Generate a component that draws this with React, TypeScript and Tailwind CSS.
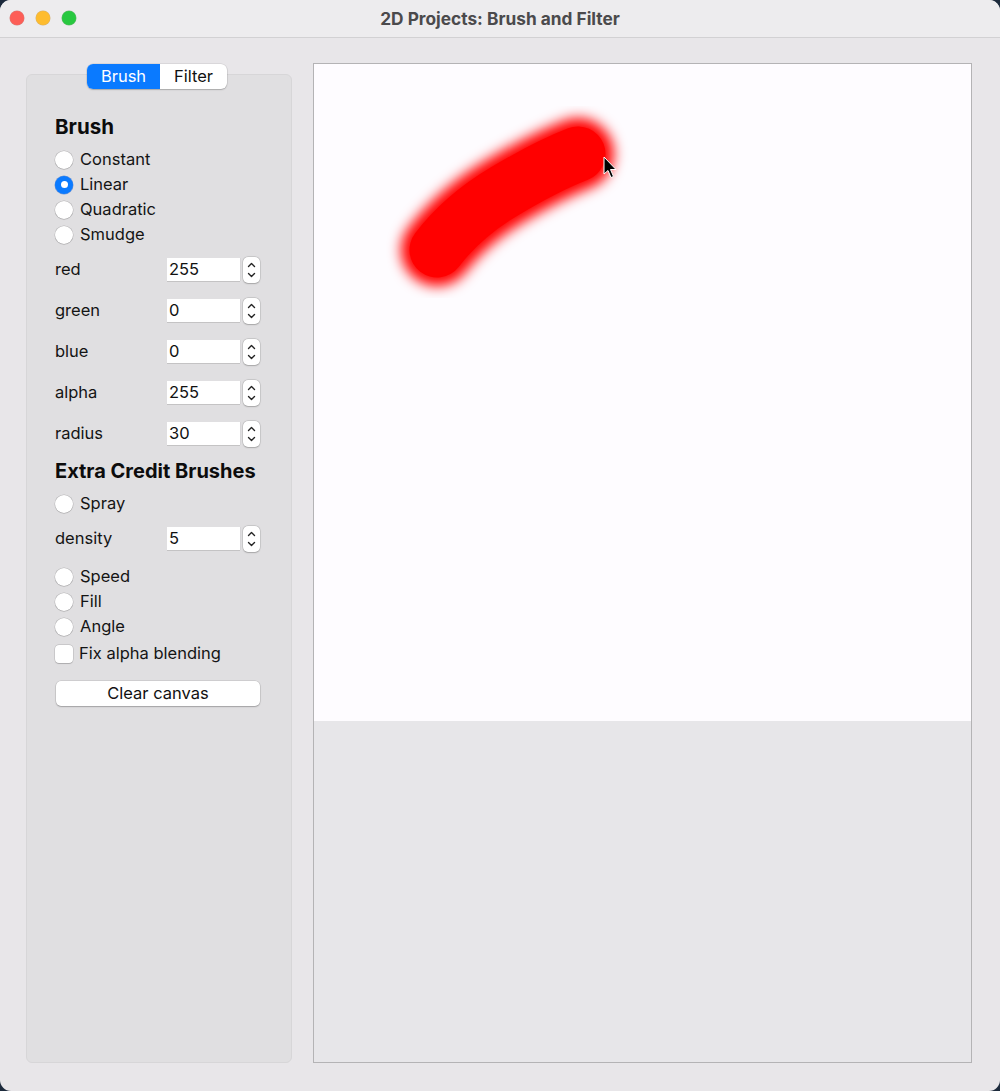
import React from "react";

const font = { fontFamily: "Inter, 'Noto Sans', 'Liberation Sans', sans-serif" };

function Radio({ label, checked = false }: { label: string; checked?: boolean }) {
  return (
    <div className="flex h-[25px] items-center">
      {checked ? (
        <div className="flex h-[18px] w-[18px] items-center justify-center rounded-full bg-[#0a7aff] shadow-[0_0_0_0.5px_rgba(0,80,200,0.5)]">
          <div className="h-[7px] w-[7px] rounded-full bg-white" />
        </div>
      ) : (
        <div className="h-[18px] w-[18px] rounded-full bg-white shadow-[0_0_0_0.5px_rgba(0,0,0,0.18),0_0.5px_1px_rgba(0,0,0,0.15)]" />
      )}
      <span className="ml-[7px] text-[16.5px] leading-none text-[#141414]">{label}</span>
    </div>
  );
}

function Spin({ label, value }: { label: string; value: string }) {
  return (
    <div className="flex h-[41px] items-center">
      <span className="w-[112px] text-[16.5px] leading-none text-[#141414]">{label}</span>
      <div className="flex h-[23px] w-[73px] items-center bg-white pl-[2px] text-[16.5px] leading-none text-[#111] shadow-[0_0.5px_0_0_rgba(0,0,0,0.25),0.5px_0_0_0_rgba(0,0,0,0.08)]">
        {value}
      </div>
      <div className="ml-[3px] flex h-[26px] w-[17px] flex-col items-center justify-center rounded-[5px] bg-white shadow-[0_0_0_0.5px_rgba(0,0,0,0.15),0_0.5px_1.5px_rgba(0,0,0,0.2)]">
        <svg width="9" height="20" viewBox="0 0 9 20" fill="none" stroke="#222" strokeWidth="1.4" strokeLinecap="round" strokeLinejoin="round">
          <path d="M1.5 6.5 L4.5 3.5 L7.5 6.5" />
          <path d="M1.5 13.5 L4.5 16.5 L7.5 13.5" />
        </svg>
      </div>
    </div>
  );
}

export default function App() {
  return (
    <div className="h-[1091px] w-[1000px] bg-[#1c2a3c]" style={font}>
      <div className="flex h-full w-full flex-col overflow-hidden rounded-[11px] bg-[#e8e6e9]">
        {/* title bar */}
        <div className="relative flex h-[38px] shrink-0 items-center justify-center border-b border-[#d2d1d3] bg-[#edecee]">
          <div className="absolute left-[10px] top-[11px] flex gap-[12px]">
            <div className="h-[14px] w-[14px] rounded-full bg-[#fd5e57] shadow-[0_0_0_0.5px_rgba(200,60,50,0.6)]" />
            <div className="h-[14px] w-[14px] rounded-full bg-[#febc2e] shadow-[0_0_0_0.5px_rgba(200,140,30,0.6)]" />
            <div className="h-[14px] w-[14px] rounded-full bg-[#28c840] shadow-[0_0_0_0.5px_rgba(30,150,40,0.6)]" />
          </div>
          <span className="text-[17.3px] font-bold text-[#4b4a4c]">2D Projects: Brush and Filter</span>
        </div>

        {/* body */}
        <div className="flex flex-1 pb-[28px] pl-[26px] pr-[28px] pt-[25px]">
          {/* left panel */}
          <div className="flex w-[266px] shrink-0 flex-col">
            <div className="relative z-10 ml-[61px] mt-px flex h-[25px] self-start overflow-hidden rounded-[6px] bg-white text-[16.5px] shadow-[0_0_0_0.5px_rgba(0,0,0,0.12),0_1px_1.5px_rgba(0,0,0,0.2)]">
              <div className="flex w-[73px] items-center justify-center bg-[#0a7aff] text-white">Brush</div>
              <div className="flex w-[67px] items-center justify-center text-[#111]">Filter</div>
            </div>
            <div className="-mt-[15px] flex flex-1 flex-col rounded-[6px] border border-[#d7d6d8] bg-[#e0dfe1] pl-[28px] pt-[38px]">
              <div className="flex h-[28px] items-center text-[20.5px] font-bold text-[#0c0c0c]">Brush</div>
              <div className="mt-[6px] flex flex-col">
                <Radio label="Constant" />
                <Radio label="Linear" checked />
                <Radio label="Quadratic" />
                <Radio label="Smudge" />
              </div>
              <div className="mt-[2px] flex flex-col">
                <Spin label="red" value="255" />
                <Spin label="green" value="0" />
                <Spin label="blue" value="0" />
                <Spin label="alpha" value="255" />
                <Spin label="radius" value="30" />
              </div>
              <div className="mt-[3px] flex h-[28px] items-center text-[20px] font-bold text-[#0c0c0c]">
                Extra Credit Brushes
              </div>
              <div className="mt-[6px]">
                <Radio label="Spray" />
              </div>
              <div className="mt-[2px]">
                <Spin label="density" value="5" />
              </div>
              <div className="mt-[5px] flex flex-col">
                <Radio label="Speed" />
                <Radio label="Fill" />
                <Radio label="Angle" />
              </div>
              <div className="mt-[2px] flex h-[25px] items-center">
                <div className="h-[18px] w-[18px] rounded-[4px] bg-white shadow-[0_0_0_0.5px_rgba(0,0,0,0.18),0_0.5px_1px_rgba(0,0,0,0.15)]" />
                <span className="ml-[6px] text-[16.5px] leading-none text-[#141414]">Fix alpha blending</span>
              </div>
              <button className="ml-px mt-[15px] flex h-[25px] w-[204px] items-center justify-center rounded-[5px] bg-white text-[16.5px] text-[#111] shadow-[0_0_0_0.5px_rgba(0,0,0,0.15),0_1px_1.5px_rgba(0,0,0,0.22)]">
                Clear canvas
              </button>
            </div>
          </div>

          {/* canvas */}
          <div className="ml-[21px] flex flex-1 flex-col border border-[#b4b3b5] bg-[#e7e6e9]">
            <div className="relative h-[657px] w-full bg-[#fefcff]">
              <svg className="absolute left-0 top-0" width="658" height="657" viewBox="0 0 658 657">
                <defs>
                  <filter id="soft" x="-50%" y="-50%" width="200%" height="200%">
                    <feGaussianBlur stdDeviation="6.5" />
                  </filter>
                </defs>
                <path
                  d="M123 186 Q149 152 191 127 Q233 102 264 90"
                  fill="none"
                  stroke="#ff0000"
                  strokeWidth="72"
                  strokeLinecap="round"
                  strokeLinejoin="round"
                  filter="url(#soft)"
                />
                <path
                  d="M123 186 Q149 152 191 127 Q233 102 264 90"
                  fill="none"
                  stroke="#ff0000"
                  strokeWidth="55"
                  strokeLinecap="round"
                  strokeLinejoin="round"
                />
                {/* cursor */}
                <path
                  d="M290 93 L290 110 L294 106.5 L297 113.5 L299.5 112.5 L296.5 105.5 L302 105.5 Z"
                  fill="#000"
                  stroke="#fff"
                  strokeWidth="1"
                  strokeLinejoin="round"
                />
              </svg>
            </div>
          </div>
        </div>
      </div>
    </div>
  );
}
